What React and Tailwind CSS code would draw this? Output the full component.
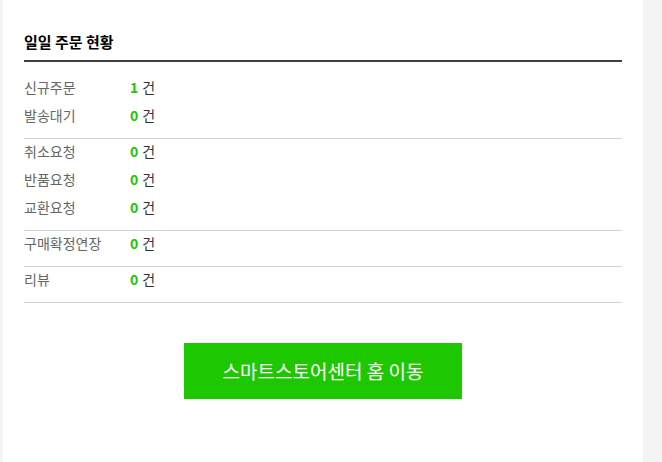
const sections = [
  [
    { label: "신규주문", count: 1 },
    { label: "발송대기", count: 0 },
  ],
  [
    { label: "취소요청", count: 0 },
    { label: "반품요청", count: 0 },
    { label: "교환요청", count: 0 },
  ],
  [{ label: "구매확정연장", count: 0 }],
  [{ label: "리뷰", count: 0 }],
];

const OrderRow = ({ label, count }) => (
  <li className="flex items-center h-6 text-[14px]">
    <span className="w-[106px] text-[#666]">{label}</span>
    <span className="font-bold text-[#1ec800]">{count}</span>
    <span className="ml-[4px] text-[#333]">건</span>
  </li>
);

export default function App() {
  return (
    <div
      className="min-h-[462px] bg-[#f4f4f4] pl-[3px]"
      style={{ fontFamily: '"Malgun Gothic", "Noto Sans CJK KR", sans-serif' }}
    >
      <div className="w-[640px] min-h-[462px] bg-white px-[21px] pt-[33px]">
        <h2 className="text-[15px] font-bold text-black leading-[18px] pb-[9px] border-b-2 border-[#3f3f3f]">
          일일 주문 현황
        </h2>
        <div className="pt-[13px]">
          {sections.map((rows, i) => (
            <ul
              key={i}
              className="flex flex-col gap-1 pb-[11px] border-b border-[#d5d5d5]"
            >
              {rows.map((r) => (
                <OrderRow key={r.label} {...r} />
              ))}
            </ul>
          ))}
        </div>
        <div className="flex justify-center pt-[40px]">
          <button className="w-[278px] h-[56px] bg-[#1ec800] text-white text-[19px] leading-none pb-[2px]">
            스마트스토어센터 홈 이동
          </button>
        </div>
      </div>
    </div>
  );
}
